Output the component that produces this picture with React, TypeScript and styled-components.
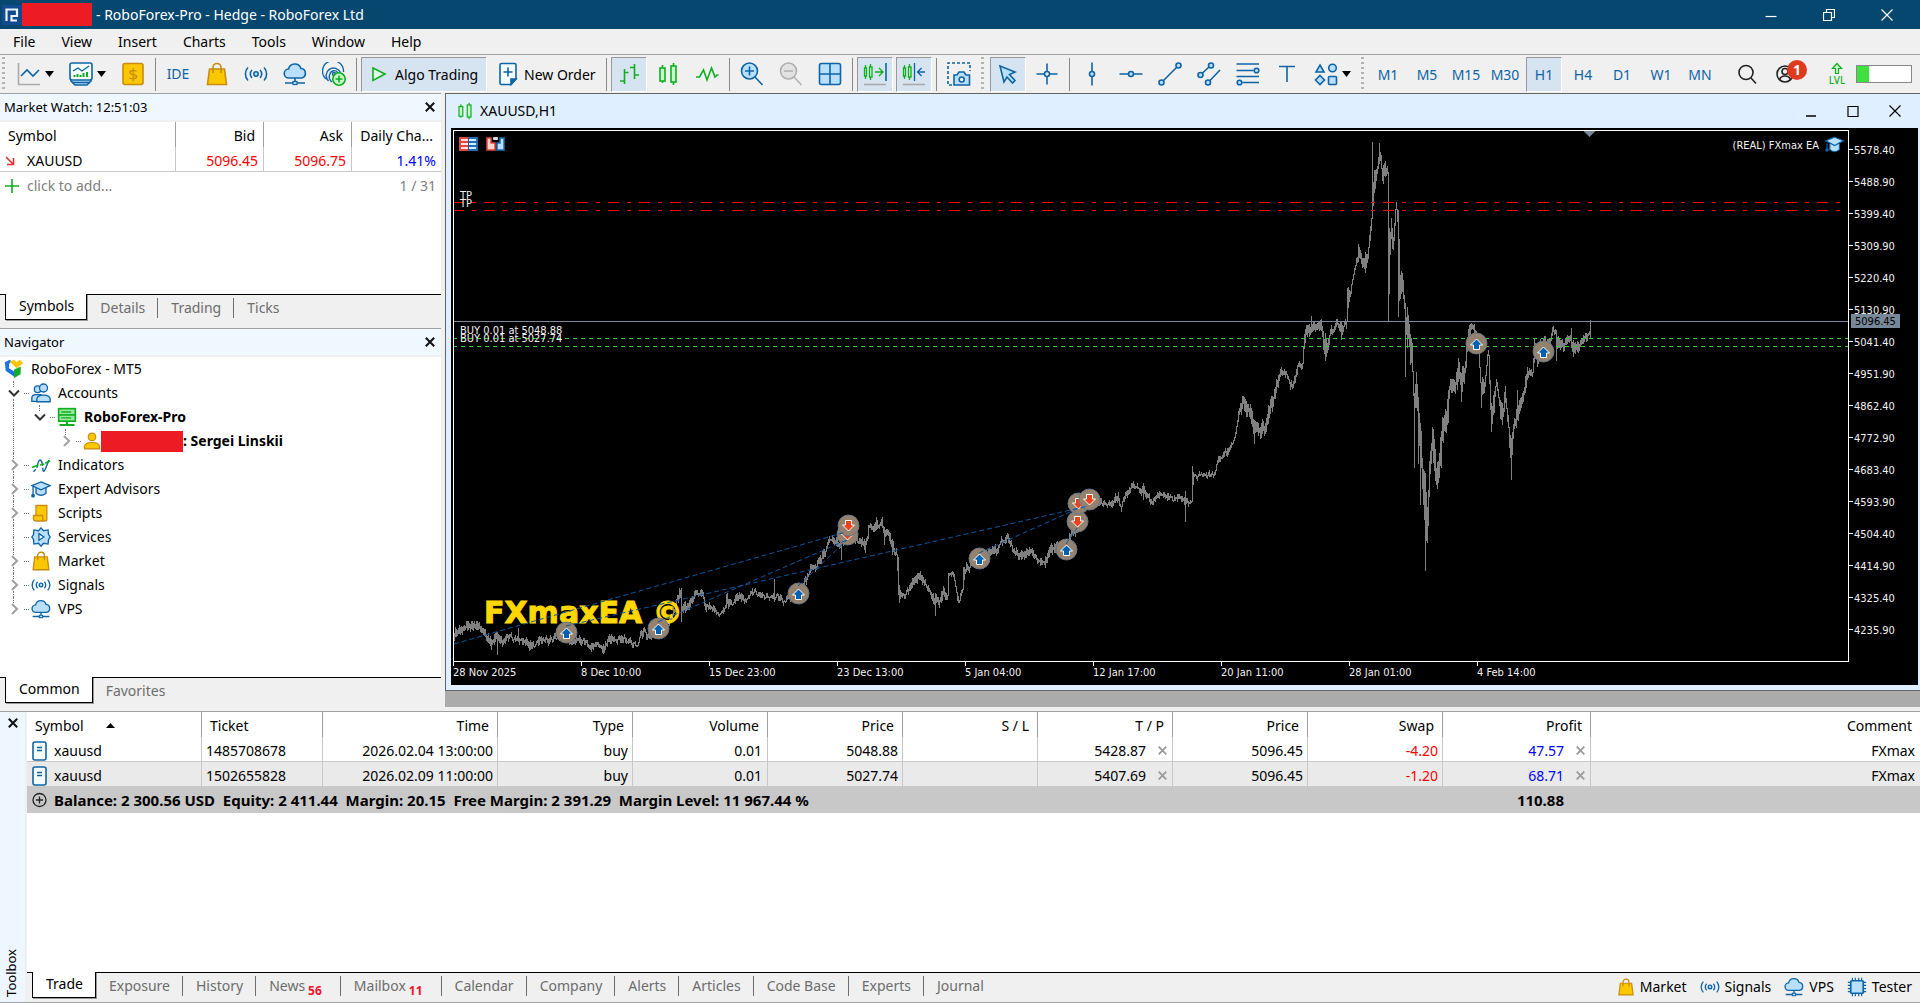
import React from 'react';
import styled, { createGlobalStyle, css } from 'styled-components';

const C = {
  blue: '#0f64a5',
  sky: '#b9dfff',
  green: '#0fae1e',
  mint: '#c8f7cc',
  gold: '#fbc800',
  goldDark: '#c98c10',
  face: '#f0f0f0',
  pressed: '#d6e4f2',
  line: '#a0a0a0',
  grid: '#c8c8c8',
};

const Global = createGlobalStyle`
  *, *::before, *::after { box-sizing: border-box; }
  body { margin: 0; background: ${C.face}; }
  body, button, table {
    font-family: 'Noto Sans', 'Open Sans', sans-serif;
    font-size: 14px;
    line-height: 20px;
    color: #000;
  }
  button { border: 0; background: none; padding: 0; margin: 0; }
  svg { display: block; flex: none; }
  ul { list-style: none; margin: 0; padding: 0; }
`;

/* ---------- icons ---------- */

type IconProps = { size?: number; children: React.ReactNode };
const Icon = ({ size = 24, children }: IconProps) => (
  <svg width={size} height={size} viewBox="0 0 24 24" fill="none" stroke={C.blue} strokeWidth="1.6" aria-hidden="true">
    {children}
  </svg>
);

const LineStudyIcon = () => (
  <Icon>
    <path d="M1.500 1V22.500H23" stroke="#aaa" />
    <path d="M4 14l6-6 6 6 6-6" />
  </Icon>
);
const TemplateIcon = () => (
  <Icon>
    <path d="M2 17v2l4 4h12l4-4v-2" fill={C.sky} />
    <path d="M3 20.500h18" />
    <rect x="1" y="1" width="22" height="17" rx="2" fill="#f4fbff" />
    <path d="M4 9l5-3 4 3 7-5" strokeWidth="1.300" />
    <path d="M5.500 15v-2M8.500 15v-3M11.500 15v-2M14.500 15v-4M18 15v-5" stroke={C.green} strokeWidth="2" />
  </Icon>
);
const DollarIcon = () => (
  <Icon>
    <rect x="2" y="1.500" width="20" height="21" rx="2" fill={C.gold} stroke={C.goldDark} />
    <text x="12" y="18" textAnchor="middle" fontSize="17" fontFamily="Noto Sans" fill={C.goldDark} stroke="none">$</text>
  </Icon>
);
const BagIcon = ({ size }: { size?: number }) => (
  <Icon size={size}>
    <path d="M4.500 7h15l2 15.500h-19z" fill={C.gold} stroke={C.goldDark} />
    <path d="M8 11V5.500a4 4 0 018 0V11" stroke={C.goldDark} />
  </Icon>
);
const SignalIcon = ({ size }: { size?: number }) => (
  <Icon size={size}>
    <circle cx="12" cy="12" r="2.200" fill={C.sky} />
    <path d="M8 8a5.600 5.600 0 000 8M16 8a5.600 5.600 0 010 8M4 5.500a9.500 9.500 0 000 13M20 5.500a9.500 9.500 0 010 13" />
  </Icon>
);
const CloudIcon = ({ size }: { size?: number }) => (
  <Icon size={size}>
    <path d="M6 16a4.500 4.500 0 01-.5-9 6.500 6.500 0 0112.500-.500A4.800 4.800 0 0118.500 16z" fill={C.sky} />
    <path d="M12 16v4M2 21h20" />
    <rect x="10" y="19.500" width="4" height="3" fill={C.sky} strokeWidth="1.200" />
  </Icon>
);
const PrintPlusIcon = () => (
  <Icon>
    <path d="M4 17a10.500 10.500 0 1117.500-7M6.500 19a7.500 7.500 0 1112-8.500M10 20a6 6 0 01-2-8 4.300 4.300 0 018-1" strokeWidth="1.400" />
    <circle cx="12" cy="12" r="1.500" strokeWidth="1.400" />
    <circle cx="17" cy="17" r="6.200" fill={C.mint} stroke={C.green} />
    <path d="M17 13.500v7M13.500 17h7" stroke={C.green} />
  </Icon>
);
const PlayIcon = () => (
  <Icon>
    <path d="M6 6l12 6-12 6.500z" fill="#e2fbe4" stroke={C.green} />
  </Icon>
);
const NewOrderIcon = () => (
  <Icon>
    <path d="M4 3q0-1.500 1.500-1.500h13q1.500 0 1.500 1.500v14l-5 5.500h-9.500Q4 22.500 4 21z" fill="#f4fbff" />
    <path d="M15 22.500v-5.500h5z" fill={C.blue} />
    <path d="M12 5.500v9M7.500 10h9" />
  </Icon>
);
const BarsIcon = () => (
  <Icon>
    <path d="M7.500 7v15M7.500 10.500h4M3 19h4.500M17.500 2v15M13 5.500h4.500M17.500 13h4.500" stroke={C.green} />
  </Icon>
);
const CandlesIcon = ({ size }: { size?: number }) => (
  <Icon size={size}>
    <path d="M6.500 3v18M17.500 1v22" stroke={C.green} />
    <rect x="4" y="6" width="5" height="13" fill={C.mint} stroke={C.green} />
    <rect x="15" y="4" width="5" height="16" fill={C.mint} stroke={C.green} />
  </Icon>
);
const ZigIcon = () => (
  <Icon>
    <path d="M1 15h3.500l4-7 3.500 10 4.500-12 3.500 9 2-2h1.500" stroke={C.green} />
  </Icon>
);
const ZoomInIcon = () => (
  <Icon>
    <circle cx="9.500" cy="9" r="8" fill={C.sky} />
    <path d="M15 15l7.500 8M9.500 4.500v9M5 9h9" />
  </Icon>
);
const ZoomOutIcon = () => (
  <Icon>
    <circle cx="9.500" cy="9" r="8" fill="#e2e2e2" stroke="#b0b0b0" />
    <path d="M15 15l7.500 8M5 9h9" stroke="#b0b0b0" />
  </Icon>
);
const GridIcon = () => (
  <Icon>
    <rect x="1.500" y="1.500" width="21" height="21" rx="2" fill={C.sky} />
    <path d="M12 1.500v21M1.500 12h21" />
  </Icon>
);
const AutoScrollIcon = () => (
  <Icon>
    <path d="M2.500 3v14M7.500 2v16M12 10h8M16 6l4 4-4 4" stroke={C.green} strokeWidth="1.300" />
    <path d="M1.500 6h2v8h-2zM6.500 5h2.500v10h-2.500z" fill={C.mint} stroke={C.green} strokeWidth="1.300" />
    <path d="M23 1v18" />
    <path d="M1 22.500h22" stroke="#aaa" />
  </Icon>
);
const ShiftIcon = () => (
  <Icon>
    <path d="M2.500 3v14M7.500 2v16" stroke={C.green} strokeWidth="1.300" />
    <path d="M1.500 6h2v8h-2zM6.500 5h2.500v10h-2.500z" fill={C.mint} stroke={C.green} strokeWidth="1.300" />
    <path d="M12.500 1v18M23 10h-7M19.500 6l-4 4 4 4" strokeWidth="1.300" />
    <path d="M1 22.500h22" stroke="#aaa" />
  </Icon>
);
const CameraIcon = () => (
  <Icon>
    <path d="M5 23H1V1h22v8" strokeDasharray="3 2" />
    <path d="M7 13h3l2-3h5l2 3h3.500v10H7z" fill={C.sky} />
    <circle cx="14.700" cy="17.500" r="2.500" fill="#fff" />
  </Icon>
);
const PointerIcon = () => (
  <Icon>
    <path d="M4 4l15 6-5.500 2.500 5.500 6-2.500 2.500-5.500-6-3 5z" fill={C.sky} />
  </Icon>
);
const CrossIcon = () => (
  <Icon>
    <path d="M12 1.500v8M12 14.500v8M1.500 12h8M14.500 12h8" />
    <circle cx="12" cy="12" r="2.500" />
  </Icon>
);
const VLineIcon = () => (
  <Icon>
    <path d="M12 .5v9M12 14.500v9" />
    <circle cx="12" cy="12" r="2.500" fill={C.sky} />
  </Icon>
);
const HLineIcon = () => (
  <Icon>
    <path d="M.5 12h9M14.500 12h9" />
    <circle cx="12" cy="12" r="2.500" fill={C.sky} />
  </Icon>
);
const TrendIcon = () => (
  <Icon>
    <path d="M5 19L19 5" />
    <circle cx="3.500" cy="20.500" r="2.500" fill={C.sky} />
    <circle cx="20.500" cy="3.500" r="2.500" fill={C.sky} />
  </Icon>
);
const ChannelIcon = () => (
  <Icon>
    <path d="M5.500 11l6.500-6M13 18.500l10-10.500" />
    <circle cx="3.500" cy="13" r="2.500" fill={C.sky} />
    <circle cx="14" cy="3.500" r="2.500" fill={C.sky} />
    <circle cx="11" cy="20.500" r="2.500" fill={C.sky} />
  </Icon>
);
const FiboIcon = () => (
  <Icon>
    <path d="M.5 2H23M.5 8.500h17M.5 14.500H23M6.500 20.500H23" />
    <circle cx="20.500" cy="8.500" r="2.300" fill={C.sky} />
    <circle cx="3.500" cy="20.500" r="2.300" fill={C.sky} />
  </Icon>
);
const TextIcon = () => (
  <Icon>
    <path d="M4 4.500h16M12 4.500V20" />
  </Icon>
);
const ShapesIcon = () => (
  <Icon>
    <path d="M6 3l4 7H2z" fill={C.sky} />
    <circle cx="18.500" cy="6" r="3.800" fill={C.sky} />
    <path d="M6 13.500l4.500 4.500L6 22.500 1.500 18z" fill={C.sky} />
    <rect x="14.500" y="14.500" width="8" height="8" rx="1" fill={C.sky} />
  </Icon>
);
const SearchIcon = () => (
  <Icon>
    <circle cx="11" cy="10.500" r="7" stroke="#222" />
    <path d="M16 16l5 5.500" stroke="#222" />
  </Icon>
);
const PersonIcon = () => (
  <Icon>
    <circle cx="11" cy="12" r="8" stroke="#222" />
    <circle cx="11" cy="9.500" r="3" stroke="#222" />
    <path d="M5.500 18q1-4 5.500-4t5.500 4" stroke="#222" />
  </Icon>
);
const LevelIcon = () => (
  <Icon>
    <path d="M12 1.500l4.500 5H13.500v5h-3v-5H7.500z" fill={C.mint} stroke={C.green} strokeWidth="1.200" />
    <text x="12" y="22" textAnchor="middle" fontSize="10" fontWeight="500" fontFamily="Noto Sans" fill={C.green} stroke="none">LVL</text>
  </Icon>
);
const CapIcon = ({ size }: { size?: number }) => (
  <Icon size={size}>
    <path d="M6 10v7q6 5 12 0v-7" fill={C.sky} />
    <path d="M12 3.500l11 4.500-11 5L1 8z" fill={C.sky} />
    <path d="M2.500 9v9" />
    <circle cx="2.500" cy="20" r="1.500" fill={C.blue} />
  </Icon>
);
const AccountsIcon = () => (
  <Icon size={20}>
    <circle cx="8" cy="7.500" r="4" fill={C.sky} />
    <path d="M1 22v-4q0-4 5-4h6v8z" fill={C.sky} />
    <circle cx="15" cy="6" r="4.800" fill={C.sky} />
    <path d="M7 22.500v-3q0-5 8-5t8 5v3z" fill={C.sky} />
  </Icon>
);
const ServerIcon = () => (
  <Icon size={20}>
    <rect x="2" y="2" width="20" height="15" fill="#9be8a2" stroke={C.green} strokeWidth="2" />
    <path d="M2 9.500h20" stroke={C.green} strokeWidth="2" />
    <path d="M5 6h12M5 13h12" stroke={C.green} strokeWidth="1.600" />
    <path d="M12 17v4M3 21.500h18" stroke={C.green} strokeWidth="2.400" />
  </Icon>
);
const UserIcon = () => (
  <Icon size={18}>
    <circle cx="12" cy="6.500" r="5" fill={C.gold} stroke={C.goldDark} />
    <path d="M2 22.500v-3q0-5.500 10-5.500t10 5.500v3z" fill={C.gold} stroke={C.goldDark} />
  </Icon>
);
const IndicatorsIcon = () => (
  <Icon size={20}>
    <path d="M3 20l4-4q1.500-10 4-10t3 9 4 0 4-11" strokeWidth="1.700" strokeDasharray="4 2 15 0" />
    <path d="M1 15l8-3M11 12l5-1M17 10l6-3" stroke={C.green} strokeWidth="2" />
  </Icon>
);
const ScriptIcon = () => (
  <Icon size={20}>
    <path d="M6 3h13v17q0 1.500-1.500 1.500H6z" fill={C.gold} stroke={C.goldDark} />
    <path d="M3 15h11v4q0 2.500 2.500 2.500H5Q3 21.500 3 19z" fill={C.gold} stroke={C.goldDark} />
  </Icon>
);
const ServiceIcon = () => (
  <Icon size={20}>
    <path d="M12 1l3 3.500 5.500-1 .5 5.500 2 3-2 3-.5 5.500-5.500-1L12 23l-3-3.500-5.500 1L3 15l-2-3 2-3 .5-5.500 5.500 1z" fill={C.sky} />
    <path d="M9.500 8l6 4-6 4z" fill="#fff" />
  </Icon>
);
const BrandIcon = () => (
  <Icon size={20}>
    <path d="M1 4l6-3 2 2-3 3v5l6 4v6L2 14z" fill="#1b74e8" stroke="none" />
    <path d="M7 3l5-2 3 3 4-3 4 4-8 6-3-3z" fill="#ffc400" stroke="none" />
    <path d="M12 13l8-4v9l-8 5z" fill="#10ad2d" stroke="none" />
  </Icon>
);
const ChipIcon = () => (
  <Icon size={20}>
    <path d="M6.500 1v22M10 1v22M14 1v22M17.500 1v22M1 6.500h22M1 10h22M1 14h22M1 17.500h22" strokeWidth="1.400" />
    <rect x="4.500" y="4.500" width="15" height="15" rx="1" fill={C.sky} strokeWidth="2" />
  </Icon>
);
const LogoIcon = () => (
  <svg width="20" height="20" viewBox="0 0 20 20" aria-hidden="true">
    <rect width="20" height="20" fill="#12498f" />
    <path d="M4.500 16V4.500H15V11H9.500V15.500H15" fill="none" stroke="#e8f2ff" strokeWidth="2.200" />
  </svg>
);
const DocIcon = () => (
  <svg width="15" height="20" viewBox="0 0 15 20" fill="none" stroke={C.blue} aria-hidden="true">
    <rect x="1" y="1" width="13" height="18" rx="2" strokeWidth="1.600" fill="#f4fbff" />
    <path d="M5 6.500h5M5 9.500h5" strokeWidth="1.500" />
  </svg>
);
const PlusCircleIcon = () => (
  <svg width="15" height="16" viewBox="0 0 15 16" fill="none" stroke="#222" aria-hidden="true">
    <circle cx="7.500" cy="8" r="6.500" strokeWidth="1.300" />
    <path d="M7.500 4.500v7M4 8h7" strokeWidth="1.300" />
  </svg>
);
const PlusIcon = () => (
  <svg width="14" height="14" viewBox="0 0 14 14" stroke={C.green} strokeWidth="1.600" aria-hidden="true">
    <path d="M7 0v14M0 7h14" />
  </svg>
);
const DownTickIcon = () => (
  <svg width="10" height="10" viewBox="0 0 10 10" stroke="#dd3333" strokeWidth="1.600" fill="none" aria-hidden="true">
    <path d="M1 1l7.500 7.500M8.500 2v6.500H2" />
  </svg>
);
const Caret = () => (
  <svg width="9" height="6" viewBox="0 0 9 6" aria-hidden="true">
    <path d="M0 0h9L4.500 6z" />
  </svg>
);
const SortIcon = () => (
  <svg width="9" height="5" viewBox="0 0 9 5" aria-hidden="true">
    <path d="M0 5h9L4.500 0z" />
  </svg>
);
const CrossMark = ({ size = 10, color = '#111', weight = 2 }: { size?: number; color?: string; weight?: number }) => (
  <svg width={size} height={size} viewBox="0 0 10 10" stroke={color} strokeWidth={weight} aria-hidden="true">
    <path d="M.8.8l8.400 8.400M9.200.8L.8 9.200" />
  </svg>
);
const Chevron = ({ open }: { open?: boolean }) => (
  <svg width="12" height="12" viewBox="0 0 12 12" fill="none" strokeWidth="2" stroke={open ? '#333' : '#a0a0a0'} aria-hidden="true">
    <path d={open ? 'M1 3.500l5 5 5-5' : 'M4 1l5 5-5 5'} />
  </svg>
);

/* ---------- shell ---------- */

const Shell = styled.div`
  display: flex;
  flex-direction: column;
  height: 100vh;
  min-height: 800px;
  background: ${C.face};
`;
const TitleBar = styled.header`
  display: flex;
  align-items: center;
  height: 29px;
  padding: 0 4px 0 2px;
  background: #05476f;
  color: #fff;
`;
const Redacted = styled.span<{ $w: number; $h: number }>`
  flex: none;
  width: ${p => p.$w}px;
  height: ${p => p.$h}px;
  background: #ed1c24;
`;
const TitleText = styled.span`
  flex: 1;
  padding-left: 4px;
`;
const WindowButton = styled.button<{ $w: number }>`
  display: grid;
  place-items: center;
  width: ${p => p.$w}px;
  height: 28px;
`;
const MenuBar = styled.nav`
  display: flex;
  height: 26px;
  border-bottom: 1px solid ${C.line};
`;
const MenuButton = styled.button`
  padding: 0 13px;
`;

/* ---------- toolbar ---------- */

const Toolbar = styled.div`
  display: flex;
  align-items: center;
  gap: 3px;
  height: 38px;
  padding: 0 8px 0 1px;
`;
const Grip = styled.span`
  width: 3px;
  height: 34px;
  margin: 0 3px 0 1px;
  background: repeating-linear-gradient(#b4b4b4 0 2px, transparent 2px 5px);
`;
const Divider = styled.span`
  width: 1px;
  height: 33px;
  margin: 0 1px;
  background: #888;
`;
const ToolButton = styled.button<{ $on?: boolean; $w?: number }>`
  position: relative;
  display: flex;
  flex: none;
  align-items: center;
  justify-content: ${p => (p.$w ? 'flex-start' : 'center')};
  gap: 4px;
  width: ${p => p.$w || 36}px;
  height: 35px;
  padding: ${p => (p.$w ? '0 0 0 5px' : '0')};
  color: ${C.blue};
  border: 1px solid transparent;
  ${p => p.$on && css`
    background: ${C.pressed};
    border-color: #999 #fff #fff #999;
  `}
`;
const ToolLabel = styled.span`
  padding-top: 2px;
  color: #000;
  white-space: nowrap;
`;
const TimeframeLabel = styled.span`
  padding-top: 2px;
`;
const Spacer = styled.span<{ $w?: number }>`
  flex: ${p => (p.$w ? `0 0 ${p.$w}px` : '1')};
`;
const CountBadge = styled.span`
  position: absolute;
  top: 2px;
  left: 18px;
  width: 20px;
  height: 20px;
  border-radius: 50%;
  background: #e03a1e;
  color: #fff;
  font-weight: 700;
  text-align: center;
`;
const LoadMeter = styled.div`
  flex: none;
  width: 56px;
  height: 18px;
  margin-left: 4px;
  border: 1px solid #888;
  background: linear-gradient(90deg, #40e040 12px, #fff 12px);
`;

const chartTypes: [string, React.FC, boolean?][] = [
  ['Bar chart', BarsIcon, true],
  ['Candlesticks', CandlesIcon],
  ['Line chart', ZigIcon],
];
const zoomTools: [string, React.FC, boolean?][] = [
  ['Zoom in', ZoomInIcon],
  ['Zoom out', ZoomOutIcon],
  ['Tile windows', GridIcon],
];
const scrollTools: [string, React.FC, boolean?][] = [
  ['Auto scroll', AutoScrollIcon, true],
  ['Chart shift', ShiftIcon, true],
];
const cursorTools: [string, React.FC, boolean?][] = [
  ['Cursor', PointerIcon, true],
  ['Crosshair', CrossIcon],
];
const drawTools: [string, React.FC, boolean?][] = [
  ['Vertical line', VLineIcon],
  ['Horizontal line', HLineIcon],
  ['Trendline', TrendIcon],
  ['Channel', ChannelIcon],
  ['Fibonacci', FiboIcon],
  ['Text', TextIcon],
];
const ToolGroup = ({ items }: { items: [string, React.FC, boolean?][] }) => (
  <>
    {items.map(([name, Glyph, on]) => (
      <ToolButton key={name} aria-label={name} $on={on}><Glyph /></ToolButton>
    ))}
  </>
);

const MainToolbar = () => (
  <Toolbar role="toolbar">
    <Grip />
    <ToolButton aria-label="Indicators" $w={49}><LineStudyIcon /><Caret /></ToolButton>
    <ToolButton aria-label="Templates" $w={49}><TemplateIcon /><Caret /></ToolButton>
    <ToolButton aria-label="Currency"><DollarIcon /></ToolButton>
    <Divider />
    <ToolButton>IDE</ToolButton>
    <ToolButton aria-label="Market"><BagIcon /></ToolButton>
    <ToolButton aria-label="Signals"><SignalIcon /></ToolButton>
    <ToolButton aria-label="VPS"><CloudIcon /></ToolButton>
    <ToolButton aria-label="Add account"><PrintPlusIcon /></ToolButton>
    <Divider />
    <ToolButton $on $w={126}><PlayIcon /><ToolLabel>Algo Trading</ToolLabel></ToolButton>
    <ToolButton $w={112}><NewOrderIcon /><ToolLabel>New Order</ToolLabel></ToolButton>
    <Divider />
    <ToolGroup items={chartTypes} />
    <Divider />
    <ToolGroup items={zoomTools} />
    <Divider />
    <ToolGroup items={scrollTools} />
    <Divider />
    <ToolButton aria-label="Screenshot"><CameraIcon /></ToolButton>
    <Grip />
    <ToolGroup items={cursorTools} />
    <Divider />
    <ToolGroup items={drawTools} />
    <ToolButton aria-label="Shapes" $w={49}><ShapesIcon /><Caret /></ToolButton>
    <Grip />
    {['M1', 'M5', 'M15', 'M30', 'H1', 'H4', 'D1', 'W1', 'MN'].map(tf => (
      <ToolButton key={tf} $on={tf === 'H1'}><TimeframeLabel>{tf}</TimeframeLabel></ToolButton>
    ))}
    <Spacer $w={5} />
    <ToolButton aria-label="Search"><SearchIcon /></ToolButton>
    <ToolButton aria-label="Notifications"><PersonIcon /><CountBadge>1</CountBadge></ToolButton>
    <Spacer />
    <LevelIcon />
    <LoadMeter role="img" aria-label="Connection load" />
  </Toolbar>
);

/* ---------- panels ---------- */

const Workspace = styled.main`
  display: flex;
  flex: 1;
  gap: 4px;
  min-height: 0;
`;
const Sidebar = styled.aside`
  display: flex;
  flex: none;
  flex-direction: column;
  width: 441px;
`;
const Panel = styled.section<{ $grow?: boolean }>`
  display: flex;
  flex-direction: column;
  flex: ${p => (p.$grow ? '1' : 'none')};
  min-height: 0;
  border-top: 1px solid ${C.line};
`;
const PanelHead = styled.div`
  display: flex;
  flex: none;
  align-items: center;
  justify-content: space-between;
  height: 26px;
  margin-bottom: 2px;
  padding: 0 5px 0 4px;
  background: #eff7ff;
  font-size: 13px;
`;
const PanelBody = styled.div<{ $h?: number }>`
  flex: ${p => (p.$h ? `0 0 ${p.$h}px` : '1')};
  min-height: 0;
  background: #fff;
`;
const TabBar = styled.div<{ $h: number }>`
  display: flex;
  flex: none;
  align-items: flex-start;
  height: ${p => p.$h}px;
  padding-left: 5px;
  border-top: 1px solid #000;
`;
const Tab = styled.button<{ $active?: boolean; $last?: boolean; $counted?: boolean }>`
  height: 20px;
  margin-top: 3px;
  padding: 0 ${p => (p.$counted ? 18 : 12)}px 2px 13px;
  color: #6d6d6d;
  border-right: 1px solid ${p => (p.$last ? 'transparent' : '#6d6d6d')};
  ${p => p.$active && css`
    height: 26px;
    margin-top: -1px;
    padding: 0 12px 2px 13px;
    color: #000;
    background: #fff;
    border: solid #000;
    border-width: 0 1px 1px;
    box-shadow: 1px 1px 0 #999;
  `}
`;
const TabCount = styled.sub`
  margin-left: 3px;
  color: #f0142d;
  font-size: 12px;
  font-weight: 700;
  line-height: 12px;
  vertical-align: -4px;
`;
const IconButton = styled.button`
  display: grid;
  place-items: center;
  width: 12px;
  height: 16px;
`;

type TabDef = { name: string; count?: number };
const Tabs = ({ items, children, height = 34 }: { items: TabDef[]; children?: React.ReactNode; height?: number }) => (
  <TabBar $h={height} role="tablist">
    {items.map((t, i) => (
      <Tab key={t.name} role="tab" aria-selected={i === 0} $active={i === 0} $last={i === items.length - 1} $counted={!!t.count}>
        {t.name}
        {t.count && <TabCount>{t.count}</TabCount>}
      </Tab>
    ))}
    {children}
  </TabBar>
);

/* ---------- tables ---------- */

const Table = styled.table`
  width: 100%;
  border-collapse: separate;
  border-spacing: 0;
  table-layout: fixed;
`;
const Th = styled.th<{ $right?: boolean }>`
  height: 25px;
  padding: 2px 8px 0;
  font-weight: 400;
  white-space: nowrap;
  text-align: ${p => (p.$right ? 'right' : 'left')};
  border-right: 1px solid ${C.line};
  &:last-child { border-right: 0; }
`;
const Td = styled.td<{ $right?: boolean; $color?: string; $flush?: boolean }>`
  height: 25px;
  padding: ${p => (p.$flush ? '3px 4px 0' : '3px 5px 0')};
  color: ${p => p.$color || 'inherit'};
  text-align: ${p => (p.$right ? 'right' : 'left')};
  border-right: 1px solid ${C.grid};
  border-bottom: 1px solid ${C.grid};
  &:last-child { border-right: 0; }
`;
const Cell = styled.span<{ $right?: boolean; $gap: number }>`
  display: flex;
  align-items: center;
  justify-content: ${p => (p.$right ? 'flex-end' : 'flex-start')};
  gap: ${p => p.$gap}px;
`;
const AddRow = styled.div`
  display: flex;
  align-items: center;
  justify-content: space-between;
  height: 28px;
  padding: 0 5px;
  color: #808080;
`;
const AddButton = styled.button`
  display: flex;
  align-items: center;
  gap: 8px;
  color: #808080;
`;

const MarketWatch = () => (
  <Panel>
    <PanelHead>
      Market Watch: 12:51:03
      <IconButton aria-label="Close Market Watch"><CrossMark /></IconButton>
    </PanelHead>
    <PanelBody $h={172}>
      <Table>
        <colgroup>
          <col width="176" /><col width="88" /><col width="88" /><col />
        </colgroup>
        <thead>
          <tr><Th>Symbol</Th><Th $right>Bid</Th><Th $right>Ask</Th><Th $right>Daily Cha...</Th></tr>
        </thead>
        <tbody>
          <tr>
            <Td><Cell $gap={12}><DownTickIcon />XAUUSD</Cell></Td>
            <Td $right $color="#f00">5096.45</Td>
            <Td $right $color="#f00">5096.75</Td>
            <Td $right $color="#00f">1.41%</Td>
          </tr>
        </tbody>
      </Table>
      <AddRow>
        <AddButton><PlusIcon />click to add...</AddButton>
        <span>1 / 31</span>
      </AddRow>
    </PanelBody>
    <Tabs items={[{ name: 'Symbols' }, { name: 'Details' }, { name: 'Trading' }, { name: 'Ticks' }]} />
  </Panel>
);

/* ---------- navigator tree ---------- */

const Tree = styled.ul``;
const TreeRow = styled.li<{ $root?: boolean; $bold?: boolean }>`
  display: flex;
  align-items: center;
  height: 24px;
  padding-left: ${p => (p.$root ? 4 : 3)}px;
  font-weight: ${p => (p.$bold ? 700 : 400)};
`;
const Guide = styled.span<{ $spaced?: boolean }>`
  display: flex;
  flex: none;
  flex-direction: column;
  align-items: center;
  width: 21px;
  height: 24px;
  margin-right: ${p => (p.$spaced ? 5 : 0)}px;
`;
const Rail = styled.i<{ $hidden?: boolean }>`
  flex: 1;
  border-left: 1px dotted ${p => (p.$hidden ? 'transparent' : '#777')};
`;
const Stub = styled.i`
  width: 5px;
  margin-right: 2px;
  border-top: 1px dotted #777;
`;
const TreeLabel = styled.span`
  display: flex;
  align-items: center;
  padding-left: 7px;
`;

type Node = { label: string; icon: React.ReactNode; depth?: number; open?: boolean; leaf?: boolean; bold?: boolean; last?: boolean; masked?: boolean };
const nodes: Node[] = [
  { label: 'Accounts', icon: <AccountsIcon />, open: true },
  { label: 'RoboForex-Pro', icon: <ServerIcon />, depth: 1, open: true, bold: true },
  { label: ': Sergei Linskii', icon: <UserIcon />, depth: 2, bold: true, masked: true },
  { label: 'Indicators', icon: <IndicatorsIcon /> },
  { label: 'Expert Advisors', icon: <CapIcon size={20} /> },
  { label: 'Scripts', icon: <ScriptIcon /> },
  { label: 'Services', icon: <ServiceIcon />, leaf: true },
  { label: 'Market', icon: <BagIcon size={20} /> },
  { label: 'Signals', icon: <SignalIcon size={20} /> },
  { label: 'VPS', icon: <CloudIcon size={20} />, last: true },
];

const Navigator = () => (
  <Panel $grow>
    <PanelHead>
      Navigator
      <IconButton aria-label="Close Navigator"><CrossMark /></IconButton>
    </PanelHead>
    <PanelBody>
      <Tree>
        <TreeRow $root><BrandIcon /><TreeLabel>RoboForex - MT5</TreeLabel></TreeRow>
        {nodes.map(n => {
          const depth = n.depth || 0;
          return (
            <TreeRow key={n.label} $bold={n.bold}>
              {Array.from({ length: depth }, (_, i) => (
                <Guide key={i} $spaced><Rail $hidden={i > 0} /></Guide>
              ))}
              <Guide>
                <Rail />
                {!n.leaf && <Chevron open={n.open} />}
                <Rail $hidden={n.last || depth > 0} />
              </Guide>
              <Stub />
              {n.icon}
              {n.masked && <Redacted $w={82} $h={21} />}
              {n.masked ? n.label : <TreeLabel>{n.label}</TreeLabel>}
            </TreeRow>
          );
        })}
      </Tree>
    </PanelBody>
    <Tabs items={[{ name: 'Common' }, { name: 'Favorites' }]} />
  </Panel>
);

/* ---------- chart ---------- */

// x, high, low of the price envelope
const envelope: [number, number, number][] = [
  [454,632,643],[459,625,633],[466,622,631],[471,620,629],[480,624,633],[487,633,640],[491,637,648],[495,632,640],[502,637,645],[507,633,640],
  [514,636,642],[525,638,645],[530,640,650],[533,643,650],[540,638,645],[550,637,643],[556,635,640],[563,630,638],[570,637,645],[580,637,643],
  [586,638,643],[589,643,650],[598,642,648],[602,645,653],[607,638,645],[612,635,642],[625,637,643],[632,640,647],[638,642,647],[640,630,640],
  [643,627,635],[648,633,640],[655,635,640],[664,623,630],[672,613,620],[677,593,603],[680,588,600],[682,600,614],[686,603,612],[691,597,605],
  [696,589,595],[702,590,597],[705,602,611],[709,602,607],[715,607,613],[720,612,616],[724,607,613],[727,596,607],[731,602,607],[740,592,600],
  [745,597,603],[751,589,595],[760,593,598],[770,597,600],[777,593,598],[783,598,603],[790,595,599],[800,587,593],[806,577,583],[810,563,572],
  [815,565,570],[820,555,565],[825,548,555],[829,536,543],[834,538,545],[840,540,547],[845,535,543],[855,538,543],[861,538,545],[865,541,552],
  [867,538,543],[868,527,532],[873,523,530],[876,518,528],[879,522,528],[882,518,527],[884,527,538],[888,530,537],[892,543,557],[896,548,557],
  [899,592,602],[905,593,598],[910,583,592],[918,570,580],[923,577,585],[929,587,594],[934,593,605],[939,597,605],[943,587,597],[947,595,601],
  [948,571,577],[953,570,575],[957,593,602],[959,597,603],[962,587,593],[963,567,587],[965,563,573],[968,566,572],[975,556,563],[980,555,562],
  [990,547,555],[997,545,553],[1001,538,545],[1008,535,542],[1012,543,550],[1016,550,557],[1022,552,560],[1032,548,555],[1038,560,565],
  [1042,557,563],[1045,558,566],[1049,548,557],[1054,541,550],[1060,543,550],[1066,540,547],[1071,528,540],[1075,530,537],[1080,513,523],
  [1085,500,507],[1100,500,507],[1107,502,508],[1113,500,507],[1115,489,502],[1121,502,509],[1126,490,498],[1131,484,490],[1139,485,491],
  [1141,490,498],[1143,484,493],[1147,490,498],[1152,500,506],[1158,493,500],[1165,492,498],[1173,497,502],[1180,495,500],[1184,496,503],
  [1188,500,507],[1191,500,506],[1192,467,493],[1194,475,480],[1200,472,477],[1210,472,477],[1214,471,476],[1217,460,467],[1222,452,458],
  [1228,447,455],[1233,440,444],[1236,425,435],[1240,400,414],[1243,397,408],[1247,403,415],[1250,408,422],[1253,420,436],[1258,425,438],
  [1264,420,432],[1268,410,425],[1272,395,408],[1276,380,392],[1280,368,377],[1286,369,376],[1290,383,391],[1295,375,383],[1298,361,370],
  [1302,360,367],[1303,343,360],[1306,323,333],[1309,326,337],[1311,320,330],[1316,322,330],[1321,319,328],[1323,333,351],[1325,335,354],
  [1328,337,350],[1331,327,335],[1337,321,327],[1341,323,334],[1346,320,327],[1347,292,321],[1350,290,298],[1353,273,280],[1357,256,265],
  [1359,248,257],[1362,258,268],[1365,255,268],[1368,247,258],[1370,225,241],[1372,200,216],[1374,168,196],[1377,159,175],[1380,147,160],
  [1382,160,180],[1384,168,184],[1387,162,173],[1389,245,292],[1391,224,247],[1393,234,254],[1395,203,221],[1396,196,212],[1398,210,240],
  [1399,275,300],[1402,270,292],[1404,290,312],[1406,308,340],[1408,305,340],[1410,322,358],[1412,342,375],[1414,393,420],[1416,378,415],
  [1419,400,450],[1421,435,470],[1423,453,495],[1425,470,530],[1427,488,535],[1430,452,480],[1432,426,450],[1433,434,470],[1435,460,490],
  [1438,462,488],[1441,440,476],[1442,412,440],[1444,418,443],[1448,395,420],[1450,375,392],[1453,380,396],[1456,375,394],[1459,365,382],
  [1461,370,395],[1464,367,382],[1466,345,368],[1468,330,343],[1471,324,332],[1474,324,332],[1478,340,350],[1481,385,404],[1484,377,396],
  [1486,362,376],[1488,348,358],[1490,380,412],[1491,403,426],[1494,390,410],[1496,378,390],[1499,396,410],[1502,403,425],[1505,390,408],
  [1508,413,430],[1510,437,462],[1512,432,455],[1514,413,432],[1516,410,424],[1518,397,416],[1520,397,415],[1523,393,405],[1526,374,388],
  [1529,367,376],[1532,370,377],[1534,342,362],[1537,343,360],[1543,340,352],[1550,337,343],[1552,328,337],[1555,326,332],[1557,336,350],
  [1560,338,350],[1563,343,352],[1567,334,342],[1570,335,343],[1573,342,352],[1577,343,352],[1582,336,345],[1588,332,338],[1590,330,337],
];
// isolated wicks
const wicks: [number, number, number][] = [
  [497,632,655],[518,628,641],[681,588,622],[726,594,608],[774,579,602],[841,540,560],[865,541,553],[876,517,530],[882,517,528],[884,528,545],[898,557,595],[935,593,616],
  [1008,534,543],[1045,556,568],[1143,483,500],[1185,491,522],[1192,466,493],[1254,425,444],[1311,316,330],[1325,333,361],[1341,322,340],
  [1358,244,262],[1365,252,273],[1372,142,207],[1379,143,160],[1388,178,321],[1398,210,317],[1405,303,377],[1414,393,468],[1418,397,464],
  [1420,433,505],[1425,508,571],[1458,358,380],[1481,387,408],[1491,403,432],[1511,442,480],[1517,390,420],[1534,338,363],[1556,330,361],
  [1571,328,343],[1573,340,357],[1590,320,338],
];

const buildBars = () => {
  let seed = 7;
  const rnd = () => (seed = (seed * 16807) % 2147483647) / 2147483647;
  let d = '';
  let prev: [number, number] | null = null;
  let drift = 0;
  for (let i = 0; i < envelope.length - 1; i++) {
    const [x0, h0, l0] = envelope[i];
    const [x1, h1, l1] = envelope[i + 1];
    for (let x = x0; x < x1; x++) {
      const t = (x - x0) / (x1 - x0);
      const h = h0 + (h1 - h0) * t;
      const l = l0 + (l1 - l0) * t;
      const amp = Math.max(l - h, 8) * 0.5;
      if (x % 2 === 0) drift = (rnd() - 0.5) * amp * 0.9;
      let top = h + drift + (rnd() - 0.35) * amp;
      let bottom = l + drift - (rnd() - 0.35) * amp;
      if (bottom - top < 2) bottom = top + 2;
      const jump = x1 - x0 === 1 && Math.abs(h1 - h0) > 20;
      if (prev && !jump) {
        top = Math.min(top, prev[1] - 1);
        bottom = Math.max(bottom, prev[0] + 1);
      }
      top = Math.round(top);
      bottom = Math.round(bottom);
      prev = [top > h ? top : Math.round(h), bottom < l ? bottom : Math.round(l)];
      d += `M${x}.5 ${top}V${bottom}`;
    }
  }
  wicks.forEach(([x, a, b]) => { d += `M${x}.5 ${a}V${b}`; });
  return d;
};
const barsPath = buildBars();

const priceLabels = Array.from({ length: 16 }, (_, i) => (5578.4 - 89.5 * i).toFixed(2));
const timeLabels = ['28 Nov 2025', '8 Dec 10:00', '15 Dec 23:00', '23 Dec 13:00', '5 Jan 04:00', '12 Jan 17:00', '20 Jan 11:00', '28 Jan 01:00', '4 Feb 14:00'];
const tradeLines: [number, number, number, number][] = [
  [454,644,846,532],[566,626,1088,506],[658,622,847,540],[798,586,847,540],[979,553,1077,509],[1066,544,1077,528],
];
const deals: [number, number, boolean][] = [
  [566,632,true],[658,628,true],[798,593,true],[847,534,false],[848,525,false],[979,558,true],[1077,521,false],[1078,503,false],
  [1089,499,false],[1066,549,true],[1476,343,true],[1543,351,true],
];

const Mdi = styled.div`
  display: flex;
  flex: 1;
  flex-direction: column;
  min-width: 0;
  margin-bottom: 4px;
  padding-bottom: 16px;
  background: #ababab;
`;
const ChartWindow = styled.section`
  display: flex;
  flex: 1;
  flex-direction: column;
  min-height: 0;
  padding: 0 2px 5px 5px;
  background: #e0efff;
  border: solid #646464;
  border-width: 1px 0 1px 1px;
`;
const ChartTitle = styled.div`
  display: flex;
  align-items: center;
  flex: none;
  height: 34px;
  padding: 0 2px 0 5px;
`;
const ChartName = styled.span`
  flex: 1;
  padding-left: 6px;
`;
const ChartSurface = styled.div`
  flex: 1;
  min-height: 0;
  background: #000;
  svg { width: 100%; height: 100%; }
  text { font-family: 'DejaVu Sans Condensed', 'DejaVu Sans', sans-serif; font-stretch: condensed; font-size: 11px; fill: #f2f2f2; }
  text.tag { fill: #000; }
  text.mark { font-family: 'DejaVu Sans', sans-serif; font-stretch: normal; font-size: 30px; font-weight: 700; fill: #ffd700; stroke: #ffd700; }
`;

const Chart = () => (
  <ChartSurface>
    <svg viewBox="451 128 1467 557" preserveAspectRatio="xMinYMin meet" role="img" aria-label="XAUUSD hourly price chart">
      <path d={barsPath} stroke="#808080" shapeRendering="crispEdges" />
      <path d="M453 202.500H1848M453 210.500H1848" stroke="#f00" strokeDasharray="11 8 4 8" shapeRendering="crispEdges" />
      <path d="M453 338.500H1848M453 346.500H1848" stroke="#32cd32" strokeDasharray="4 4" shapeRendering="crispEdges" />
      <path d="M454 321.500H1848" stroke="#778899" shapeRendering="crispEdges" />
      <text className="mark" x="484" y="623" xmlSpace="preserve">FXmaxEA ©</text>
      {deals.map(([x, y, buy]) => (
        <g key={`${x}-${y}`} transform={`translate(${x + 0.5} ${y + 0.5})`}>
          <circle r="10.500" fill="#94826f" stroke="#66778a" />
          <path
            d={buy ? 'M0-4.500L6 1.500H3V6H-3V1.500H-6z' : 'M0 5.500L6-.5H3V-5H-3V-.5H-6z'}
            fill={buy ? '#0060b4' : '#e8431c'}
            stroke="#fff"
          />
        </g>
      ))}
      {tradeLines.map(([x1, y1, x2, y2]) => (
        <path key={`${x1}-${y1}`} d={`M${x1} ${y1}L${x2} ${y2}`} stroke="#0a57a0" strokeDasharray="5 3" />
      ))}
      <text x="460" y="199">TP</text>
      <text x="460" y="207">TP</text>
      <text x="460" y="334">BUY 0.01 at 5048.88</text>
      <text x="460" y="342">BUY 0.01 at 5027.74</text>
      <path d="M453.500 665V130.500H1848.500V661.500H453.500" stroke="#fff" fill="none" shapeRendering="crispEdges" />
      <path d="M1583.500 131h12L1589.500 137z" fill="#778899" />
      {timeLabels.map((t, i) => (
        <React.Fragment key={t}>
          <path d={`M${453 + 128 * i}.5 662v4`} stroke="#fff" />
          <text x={453 + 128 * i} y="676">{t}</text>
        </React.Fragment>
      ))}
      {priceLabels.map((p, i) => (
        <React.Fragment key={p}>
          <path d={`M1849 ${149 + 32 * i}.5h4`} stroke="#fff" />
          <text x="1854" y={154 + 32 * i}>{p}</text>
        </React.Fragment>
      ))}
      <rect x="1851" y="314" width="49" height="14" fill="#778899" />
      <text className="tag" x="1855" y="325">5096.45</text>
      <text x="1819" y="149" textAnchor="end">(REAL) FXmax EA</text>
      <g transform="translate(1825 136) scale(.8)" stroke={C.blue} strokeWidth="1.500">
        <path d="M6 10v7q6 5 12 0v-7" fill={C.sky} />
        <path d="M12 1.500l11 4.500-11 6L1 6z" fill={C.sky} />
        <path d="M2.500 9v8" />
        <circle cx="2.500" cy="17.500" r="1.500" fill={C.blue} />
      </g>
      <g>
        <rect x="459" y="137" width="9.500" height="14" fill="#e0473f" />
        <rect x="468.500" y="137" width="9.500" height="14" fill="#1b6fb5" />
        <path d="M461 140h7M461 144h7M461 148h7" stroke="#ffe0dc" strokeWidth="2" />
        <path d="M469 140h7M469 144h7M469 148h7" stroke="#d5ecff" strokeWidth="2" />
        <path d="M487 138h4v5h4v7h-8z" fill="#ffd5d0" stroke="#e0473f" strokeWidth="1.500" />
        <path d="M504 138h-4v5h-3v7h7z" fill={C.sky} stroke="#1b6fb5" strokeWidth="1.500" />
        <rect x="493" y="137" width="5" height="3" rx="1" fill="#ddd" />
      </g>
    </svg>
  </ChartSurface>
);

const winGlyphs = {
  min: 'M.5 7.500h11',
  max: 'M1 1.500h10v10H1z',
  restore: 'M.5 3.500h8v8h-8zM3.500 3V.5h8v8H9',
  close: 'M.5.5l11 11M11.500.5l-11 11',
};
const WinGlyph = ({ kind, color }: { kind: keyof typeof winGlyphs; color: string }) => (
  <svg width="12" height="12" viewBox="0 0 12 12" fill="none" stroke={color} strokeWidth="1.200" aria-hidden="true">
    <path d={winGlyphs[kind]} />
  </svg>
);
const LowGlyph = () => (
  <svg width="12" height="12" viewBox="0 0 12 12" stroke="#000" strokeWidth="1.500" aria-hidden="true">
    <path d="M1 11h10" />
  </svg>
);

/* ---------- toolbox ---------- */

const Toolbox = styled.section`
  display: flex;
  flex: 0 0 292px;
  border: solid ${C.line};
  border-width: 1px 0;
`;
const ToolboxStrip = styled.div`
  display: flex;
  flex: none;
  flex-direction: column;
  align-items: center;
  justify-content: space-between;
  width: 25px;
  margin-right: 2px;
  padding: 3px 0 5px;
  background: #eef6ff;
`;
const ToolboxTitle = styled.span`
  margin-right: 4px;
  writing-mode: vertical-rl;
  rotate: 180deg;
  font-size: 13px;
`;
const ToolboxMain = styled.div`
  display: flex;
  flex: 1;
  flex-direction: column;
  min-width: 0;
`;
const TradeRow = styled.tr<{ $alt?: boolean }>`
  background: ${p => (p.$alt ? '#eaeaea' : '#fff')};
`;
const SummaryCell = styled.td`
  height: 26px;
  padding: 0 5px;
  background: ${C.grid};
  font-size: 15px;
  font-weight: 700;
  white-space: pre;
`;
const StatusLinks = styled.div`
  display: flex;
  gap: 13px;
  margin-left: auto;
  padding: 4px 8px 0 0;
`;
const StatusLink = styled.button`
  display: flex;
  align-items: center;
  gap: 5px;
`;

const columns: [string, number?][] = [
  ['Symbol', 175], ['Ticket', 121], ['Time', 175], ['Type', 135], ['Volume', 135], ['Price', 135],
  ['S / L', 135], ['T / P', 135], ['Price', 135], ['Swap', 135], ['Profit', 148], ['Comment'],
];
const trades = [
  { ticket: '1485708678', time: '2026.02.04 13:00:00', open: '5048.88', tp: '5428.87', swap: '-4.20', profit: '47.57' },
  { ticket: '1502655828', time: '2026.02.09 11:00:00', open: '5027.74', tp: '5407.69', swap: '-1.20', profit: '68.71' },
];
const ClearButton = styled(IconButton)`
  width: 10px;
`;
const ProfitValue = styled.span`
  display: block;
  padding-right: 22px;
  text-align: right;
`;
const DocCell = styled(Cell)`
  height: 20px;
`;

const ToolboxPanel = () => (
  <Toolbox>
    <ToolboxStrip>
      <IconButton aria-label="Close Toolbox"><CrossMark /></IconButton>
      <ToolboxTitle>Toolbox</ToolboxTitle>
    </ToolboxStrip>
    <ToolboxMain>
      <PanelBody>
        <Table>
          <colgroup>{columns.map(([n, w], i) => <col key={i} width={w} />)}</colgroup>
          <thead>
            <tr>
              {columns.map(([n], i) => (
                <Th key={i} $right={i > 1}>
                  {i === 0 ? <Cell $gap={22}>{n}<SortIcon /></Cell> : n}
                </Th>
              ))}
            </tr>
          </thead>
          <tbody>
            {trades.map((t, i) => (
              <TradeRow key={t.ticket} $alt={i === 1}>
                <Td><DocCell $gap={7}><DocIcon />xauusd</DocCell></Td>
                <Td $flush>{t.ticket}</Td>
                <Td $right $flush>{t.time}</Td>
                <Td $right $flush>buy</Td>
                <Td $right>0.01</Td>
                <Td $right $flush>{t.open}</Td>
                <Td />
                <Td $right><Cell $right $gap={11}>{t.tp}<ClearButton aria-label="Remove take profit"><CrossMark size={9} color="#9a9a9a" /></ClearButton></Cell></Td>
                <Td $right $flush>5096.45</Td>
                <Td $right $flush $color="#f00">{t.swap}</Td>
                <Td $right $color="#00f"><Cell $right $gap={11}>{t.profit}<ClearButton aria-label="Close position"><CrossMark size={9} color="#9a9a9a" /></ClearButton></Cell></Td>
                <Td $right>FXmax</Td>
              </TradeRow>
            ))}
            <tr>
              <SummaryCell colSpan={10}>
                <Cell $gap={7}><PlusCircleIcon />{'Balance: 2 300.56 USD  Equity: 2 411.44  Margin: 20.15  Free Margin: 2 391.29  Margin Level: 11 967.44 %'}</Cell>
              </SummaryCell>
              <SummaryCell><ProfitValue>110.88</ProfitValue></SummaryCell>
              <SummaryCell />
            </tr>
          </tbody>
        </Table>
      </PanelBody>
      <Tabs
        height={30}
        items={[
          { name: 'Trade' }, { name: 'Exposure' }, { name: 'History' }, { name: 'News', count: 56 }, { name: 'Mailbox', count: 11 },
          { name: 'Calendar' }, { name: 'Company' }, { name: 'Alerts' }, { name: 'Articles' }, { name: 'Code Base' }, { name: 'Experts' }, { name: 'Journal' },
        ]}
      >
        <StatusLinks>
          <StatusLink><BagIcon size={18} />Market</StatusLink>
          <StatusLink><SignalIcon size={20} />Signals</StatusLink>
          <StatusLink><CloudIcon size={20} />VPS</StatusLink>
          <StatusLink><ChipIcon />Tester</StatusLink>
        </StatusLinks>
      </Tabs>
    </ToolboxMain>
  </Toolbox>
);

export default function App() {
  return (
    <>
      <Global />
      <Shell>
        <TitleBar>
          <LogoIcon />
          <Redacted $w={70} $h={23} />
          <TitleText>- RoboForex-Pro - Hedge - RoboForex Ltd</TitleText>
          <WindowButton $w={58} aria-label="Minimize"><WinGlyph kind="min" color="#fff" /></WindowButton>
          <WindowButton $w={58} aria-label="Restore"><WinGlyph kind="restore" color="#fff" /></WindowButton>
          <WindowButton $w={58} aria-label="Close"><WinGlyph kind="close" color="#fff" /></WindowButton>
        </TitleBar>
        <MenuBar>
          {['File', 'View', 'Insert', 'Charts', 'Tools', 'Window', 'Help'].map(m => <MenuButton key={m}>{m}</MenuButton>)}
        </MenuBar>
        <MainToolbar />
        <Workspace>
          <Sidebar>
            <MarketWatch />
            <Navigator />
          </Sidebar>
          <Mdi>
            <ChartWindow>
              <ChartTitle>
                <CandlesIcon size={18} />
                <ChartName>XAUUSD,H1</ChartName>
                <WindowButton $w={42} aria-label="Minimize chart"><LowGlyph /></WindowButton>
                <WindowButton $w={42} aria-label="Maximize chart"><WinGlyph kind="max" color="#000" /></WindowButton>
                <WindowButton $w={42} aria-label="Close chart"><WinGlyph kind="close" color="#000" /></WindowButton>
              </ChartTitle>
              <Chart />
            </ChartWindow>
          </Mdi>
        </Workspace>
        <ToolboxPanel />
      </Shell>
    </>
  );
}
